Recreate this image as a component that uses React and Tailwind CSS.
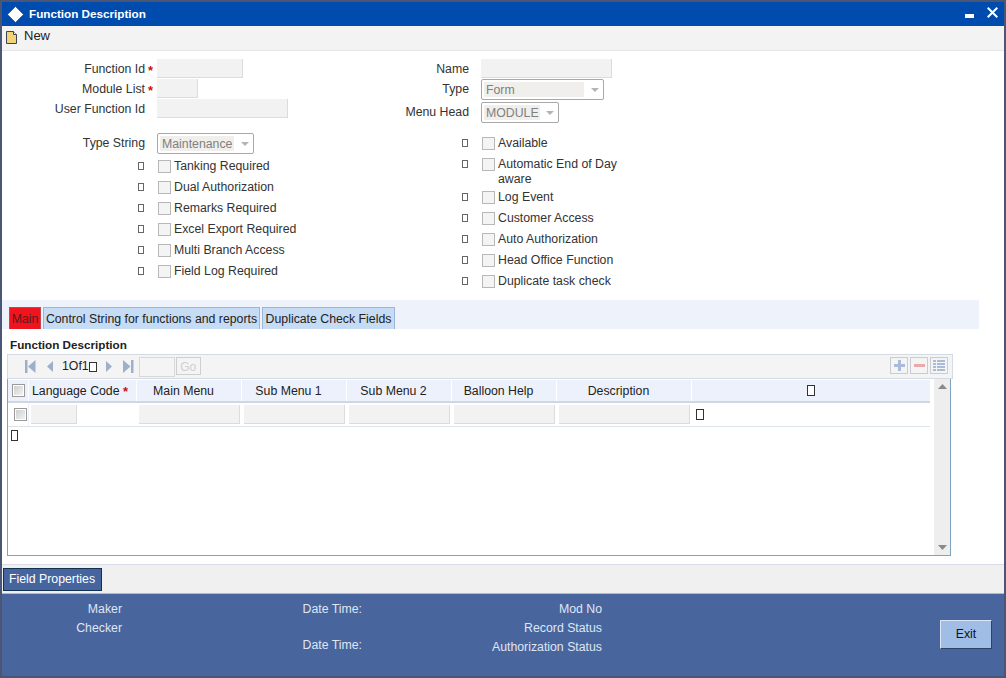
import React from "react";

const Tofu = ({ className = "w-[6px] h-[8px] border-[#666]" }) => (
  <span className={"inline-block border bg-white " + className} />
);

const Star = () => <span className="text-[#d01010] text-[13px] leading-none font-bold">*</span>;

const Input = ({ w }) => (
  <div className={"h-[19px] bg-[#f2f2f2] border-r border-b border-[#dcdcdc] " + w} />
);

const Select = ({ w, inner, text }) => (
  <div className={"h-[21px] flex items-center pl-[2px] bg-white border border-[#a8a8a8] rounded-[2px] " + w}>
    <div className={"h-[15px] bg-[#f0efeb] pl-[2px] text-[#808080] leading-[16px] " + inner}>{text}</div>
    <svg className="ml-auto mr-[4px]" width="8" height="4" viewBox="0 0 8 4"><path d="M0 0h8L4 4z" fill="#b4b4b4" /></svg>
  </div>
);

const Field = ({ label, star, lw, children, h = "h-[20px]" }) => (
  <div className={"flex items-start " + h}>
    <div className={"text-right pt-[1px] leading-[19px] text-[#333] " + lw}>{label}</div>
    <div className="w-[12px] pl-[3px] pt-[5px] leading-none">{star && <Star />}</div>
    {children}
  </div>
);

const Check = ({ tone = "bg-[#f4f4f4] border-[#b8b8b8]" }) => (
  <span className={"block shrink-0 w-[13px] h-[13px] border " + tone} />
);

const GridCheck = () => (
  <span className="block shrink-0 w-[13px] h-[13px] border border-[#9a9a9a] p-[1px] bg-white">
    <span className="block w-full h-full bg-linear-to-br from-[#cfcfcf] to-[#f2f2f2]" />
  </span>
);

const CheckRow = ({ label, lw, second }) => (
  <div className={"flex items-start " + (second ? "h-[33px]" : "h-[21px]")}>
    <div className={"flex justify-end pt-[6px] pr-[1px] " + lw}>
      <Tofu />
    </div>
    <div className="pl-[13px] pt-[4px]"><Check /></div>
    <div className="pl-[3px] pt-[3px] leading-[15px] text-[#333]">
      {label}
      {second && <div>{second}</div>}
    </div>
  </div>
);

const NavIcon = ({ d, className = "" }) => (
  <svg className={className} width="11" height="13" viewBox="0 0 11 13"><path d={d} fill="#9dafcd" /></svg>
);

const columns = ["Main Menu", "Sub Menu 1", "Sub Menu 2", "Balloon Help"];

const Tab = ({ children, active, w }) => (
  <div
    className={
      "h-[22px] flex items-center justify-center pt-[2px] border border-b-0 leading-none " +
      w + " " +
      (active ? "bg-[#f0141e] border-[#b84a50] text-[#5a1a1a]" : "bg-[#c6dbf4] border-[#9db6d6] text-[#222]")
    }
  >
    {children}
  </div>
);

export default function App() {
  return (
    <div
      className="w-[1006px] h-[678px] bg-[#4a5674] p-[2px] text-[12.3px] overflow-hidden"
      style={{ fontFamily: '"Liberation Sans", Arial, sans-serif' }}
    >
      <div className="h-full flex flex-col bg-white">
        {/* title bar */}
        <div className="h-[24px] shrink-0 bg-[#004cae] flex items-center text-white">
          <svg className="ml-[5px]" width="17" height="17" viewBox="0 0 17 17">
            <path d="M8.5 0.5L16.5 8.5L8.5 16.5L0.5 8.5z" fill="#ffffff" stroke="#12356e" strokeWidth="0.6" />
          </svg>
          <span className="ml-[5px] font-bold text-[11.7px]">Function Description</span>
          <div className="ml-auto w-[9px] h-[4px] bg-white mr-[13px] mt-[4px]" />
          <svg className="mr-[6px] mb-[3px]" width="11" height="11" viewBox="0 0 11 11">
            <path d="M0.7 0.7L10.3 10.3M10.3 0.7L0.7 10.3" stroke="#fff" strokeWidth="2" />
          </svg>
        </div>
        {/* toolbar */}
        <div className="h-[25px] shrink-0 bg-[#f3f3f3] border-b border-[#e6e6e6] flex items-center text-[#222]">
          <svg className="ml-[4px] mb-[2px]" width="11" height="13" viewBox="0 0 11 13">
            <path d="M0.5 0.5H7.5L10.5 3.5V12.5H0.5z" fill="#f2d478" stroke="#3c4450" />
            <path d="M7.5 0.5V3.5H10.5" fill="#fff" stroke="#3c4450" />
          </svg>
          <span className="ml-[7px] text-[13px] -mt-[4px]">New</span>
        </div>
        {/* form */}
        <div className="h-[249px] shrink-0 flex pt-[8px]">
          <div className="w-[324px] shrink-0">
            <Field label="Function Id" star lw="w-[143px]"><Input w="w-[86px]" /></Field>
            <Field label="Module List" star lw="w-[143px]"><Input w="w-[41px]" /></Field>
            <Field label="User Function Id" lw="w-[143px]"><Input w="w-[131px]" /></Field>
            <div className="mt-[14px]">
              <Field label="Type String" lw="w-[143px]" h="h-[23px]">
                <Select w="w-[97px]" inner="w-[74px]" text="Maintenance" />
              </Field>
            </div>
            <CheckRow lw="w-[143px]" label="Tanking Required" />
            <CheckRow lw="w-[143px]" label="Dual Authorization" />
            <CheckRow lw="w-[143px]" label="Remarks Required" />
            <CheckRow lw="w-[143px]" label="Excel Export Required" />
            <CheckRow lw="w-[143px]" label="Multi Branch Access" />
            <CheckRow lw="w-[143px]" label="Field Log Required" />
          </div>
          <div className="w-[300px] shrink-0 pl-[19px]">
            <Field label="Name" lw="w-[124px]"><Input w="w-[131px]" /></Field>
            <Field label="Type" lw="w-[124px]" h="h-[23px]">
              <Select w="w-[123px]" inner="w-[100px]" text="Form" />
            </Field>
            <Field label="Menu Head" lw="w-[124px]" h="h-[21px]">
              <Select w="w-[78px]" inner="w-[56px]" text="MODULE" />
            </Field>
            <div className="mt-[10px]">
              <CheckRow lw="w-[124px]" label="Available" />
              <CheckRow lw="w-[124px]" label="Automatic End of Day" second="aware" />
              <CheckRow lw="w-[124px]" label="Log Event" />
              <CheckRow lw="w-[124px]" label="Customer Access" />
              <CheckRow lw="w-[124px]" label="Auto Authorization" />
              <CheckRow lw="w-[124px]" label="Head Office Function" />
              <CheckRow lw="w-[124px]" label="Duplicate task check" />
            </div>
          </div>
        </div>
        {/* tabs */}
        <div className="h-[29px] w-[977px] shrink-0 bg-[#edf2fb] flex items-end pl-[7px] gap-[2px]">
          <Tab active w="w-[32px]">Main</Tab>
          <Tab w="w-[217px]">Control String for functions and reports</Tab>
          <Tab w="w-[133px]">Duplicate Check Fields</Tab>
        </div>
        {/* main content */}
        <div className="flex-1 min-h-0 pl-[5px] pt-[8px] flex flex-col">
          <div className="h-[17px] pl-[3px] font-bold text-[11.7px] leading-[16px] text-[#222]">Function Description</div>
          {/* nav */}
          <div className="h-[25px] w-[946px] shrink-0 bg-[#f4f4f4] border border-[#d3dae3] flex items-center text-[#222]">
            <NavIcon className="ml-[17px]" d="M0 0h2.5v13H0zM10.5 0v13L3 6.5z" />
            <NavIcon className="ml-[9px]" d="M8 1v11L2 6.5z" />
            <span className="ml-[6px] text-[12.3px]">1Of1</span>
            <Tofu className="mt-[1px] w-[8px] h-[10px] border-[#333]" />
            <NavIcon className="ml-[7px]" d="M2 1v11l6-5.5z" />
            <NavIcon className="ml-[8px]" d="M0 0v13l7.5-6.5zM8 0h2.5v13H8z" />
            <div className="ml-[5px] w-[36px] h-[20px] border border-[#d8d8d8] bg-[#f4f4f4]" />
            <div className="ml-[1px] w-[25px] h-[18px] mb-[2px] border border-[#cfcfcf] text-[#d0d0d0] text-[12px] leading-[18px] text-center">Go</div>
            <div className="ml-auto mr-[4px] flex gap-[2px] mb-[3px]">
              <div className="w-[18px] h-[17px] border border-[#c8ccd4] flex items-center justify-center">
                <svg width="11" height="11" viewBox="0 0 11 11"><path d="M4 0h3v4h4v3H7v4H4V7H0V4h4z" fill="#a9bbd9" /></svg>
              </div>
              <div className="w-[18px] h-[17px] border border-[#c8ccd4] flex items-center justify-center">
                <div className="w-[11px] h-[3px] bg-[#e8aaaa]" />
              </div>
              <div className="w-[18px] h-[17px] border border-[#c8ccd4] flex items-center justify-center">
                <svg width="12" height="11" viewBox="0 0 12 11"><path d="M0 0h3v2H0zM4 0h8v2H4zM0 3h3v2H0zM4 3h8v2H4zM0 6h3v2H0zM4 6h8v2H4zM0 9h3v2H0zM4 9h8v2H4z" fill="#a9bbd9" /></svg>
              </div>
            </div>
          </div>
          {/* table */}
          <div className="h-[177px] w-[944px] shrink-0 border border-t-0 border-[#7fa3bb] flex">
            <div className="w-[922px] shrink-0 flex flex-col">
              <div className="h-[23px] mt-[1px] shrink-0 bg-[#edf1fb] border-b-2 border-[#cfd7e4] flex items-center text-[#222] divide-x divide-white">
                <div className="w-[21px] h-full flex items-center pl-[4px] shrink-0">
                  <GridCheck />
                </div>
                <div className="w-[108px] h-full flex items-center pl-[3px] pt-[2px] shrink-0">
                  Language Code&nbsp;<Star />
                </div>
                {columns.map((c) => (
                  <div key={c} className="w-[105px] h-full flex items-center justify-center pr-[11px] pt-[2px] shrink-0">{c}</div>
                ))}
                <div className="w-[135px] h-full flex items-center justify-center pr-[11px] pt-[2px] shrink-0">Description</div>
                <div className="flex-1 h-full flex items-center justify-center">
                  <Tofu className="w-[8px] h-[11px] border-[#333]" />
                </div>
              </div>
              <div className="h-[24px] shrink-0 border-b border-[#dde3ea] flex items-center">
                <div className="w-[21px] h-full shrink-0 flex items-center pl-[6px] border-r border-[#edf1fb]">
                  <GridCheck />
                </div>
                <div className="pl-[2px] w-[108px] shrink-0"><Input w="w-[46px]" /></div>
                <div className="w-[105px] pl-[2px] shrink-0"><Input w="w-[101px]" /></div>
                <div className="w-[105px] pl-[2px] shrink-0"><Input w="w-[101px]" /></div>
                <div className="w-[105px] pl-[2px] shrink-0"><Input w="w-[101px]" /></div>
                <div className="w-[105px] pl-[2px] shrink-0"><Input w="w-[101px]" /></div>
                <div className="pl-[2px] shrink-0"><Input w="w-[131px]" /></div>
                <Tofu className="ml-[6px] w-[8px] h-[11px] border-[#333]" />
              </div>
              <div className="pl-[3px] pt-[3px] leading-none">
                <Tofu className="w-[7px] h-[11px] border-[#333]" />
              </div>
            </div>
            <div className="w-[16px] ml-[4px] bg-[#eeeeee] flex flex-col items-center justify-between py-[5px]">
              <svg width="9" height="5" viewBox="0 0 9 5"><path d="M0 5h9L4.5 0z" fill="#8a8a8a" /></svg>
              <svg width="9" height="5" viewBox="0 0 9 5"><path d="M0 0h9L4.5 5z" fill="#8a8a8a" /></svg>
            </div>
          </div>
          <div className="flex-1" />
        </div>
        {/* action bar */}
        <div className="h-[29px] shrink-0 bg-[#f0f0f0] border-t border-[#d9dce8] flex items-center pl-[1px]">
          <div className="w-[99px] h-[23px] bg-[#46659f] border border-[#14304f] text-white flex items-center justify-center pt-[1px] pr-[1px]">
            Field Properties
          </div>
        </div>
        {/* footer */}
        <div className="h-[83px] shrink-0 bg-[#48659d] border-t border-[#a9b9d8] flex text-[#dfe6f5] pt-[5px]">
          <div className="w-[120px] shrink-0 text-right leading-[19px] pt-[1px]">
            <div>Maker</div>
            <div>Checker</div>
          </div>
          <div className="w-[240px] shrink-0 text-right leading-[19px]">
            <div className="pt-[1px]">Date Time:</div>
            <div className="mt-[17px]">Date Time:</div>
          </div>
          <div className="w-[240px] shrink-0 text-right leading-[19px]">
            <div className="pt-[1px]">Mod No</div>
            <div>Record Status</div>
            <div>Authorization Status</div>
          </div>
          <div className="ml-auto mr-[12px] mt-[21px] w-[52px] h-[29px] bg-[#a0bde6] border border-[#dbe5f5] border-r-[#2b4468] border-b-[#2b4468] text-[#111] flex items-center justify-center">
            Exit
          </div>
        </div>
      </div>
    </div>
  );
}
